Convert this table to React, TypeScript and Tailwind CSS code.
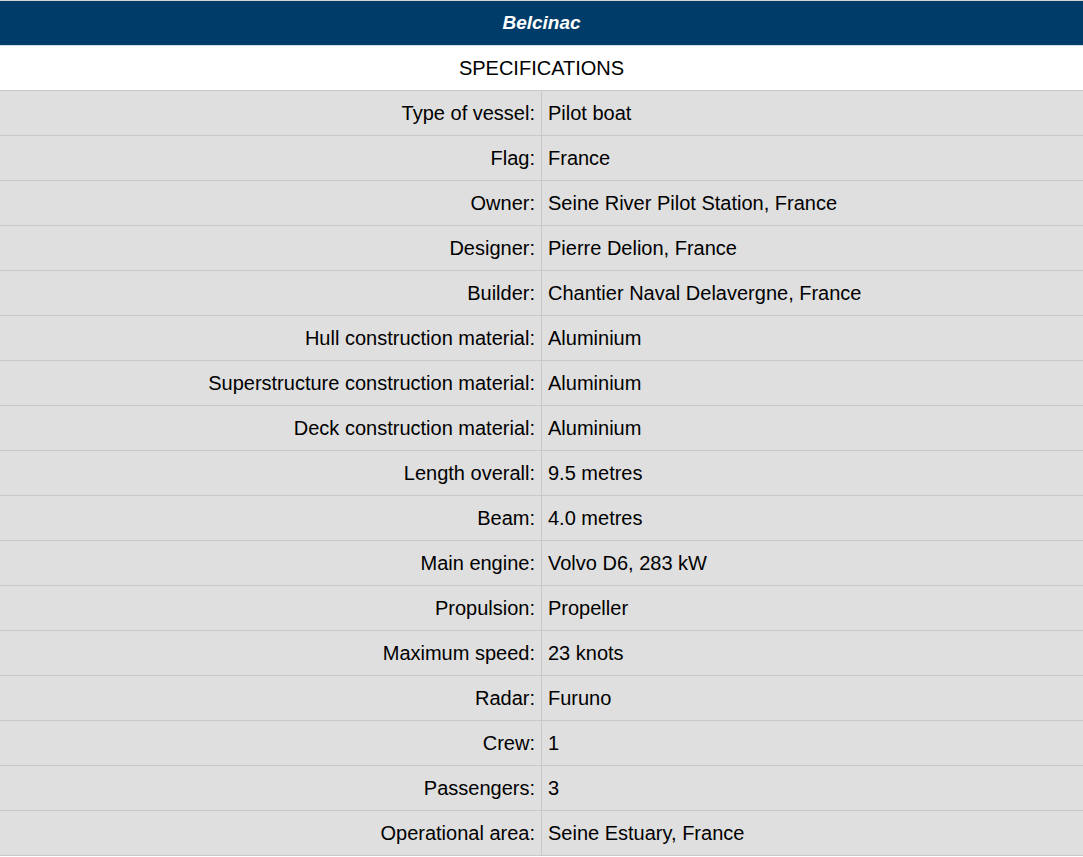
const specs: [string, string][] = [
  ['Type of vessel:', 'Pilot boat'],
  ['Flag:', 'France'],
  ['Owner:', 'Seine River Pilot Station, France'],
  ['Designer:', 'Pierre Delion, France'],
  ['Builder:', 'Chantier Naval Delavergne, France'],
  ['Hull construction material:', 'Aluminium'],
  ['Superstructure construction material:', 'Aluminium'],
  ['Deck construction material:', 'Aluminium'],
  ['Length overall:', '9.5 metres'],
  ['Beam:', '4.0 metres'],
  ['Main engine:', 'Volvo D6, 283 kW'],
  ['Propulsion:', 'Propeller'],
  ['Maximum speed:', '23 knots'],
  ['Radar:', 'Furuno'],
  ['Crew:', '1'],
  ['Passengers:', '3'],
  ['Operational area:', 'Seine Estuary, France'],
];

export default function App() {
  return (
    <div className="w-[1083px] bg-white text-[20px] text-black font-['Liberation_Sans',Arial,sans-serif] border-t border-[#d4d4d4]">
      <div className="h-[45px] bg-[#003c69] flex items-center justify-center border-b border-[#d5dde6]">
        <span className="text-white text-[19px] font-bold italic">Belcinac</span>
      </div>
      <div className="h-[45px] flex items-center justify-center border-b border-[#c8c8c8] pb-[1px]">
        SPECIFICATIONS
      </div>
      {specs.map(([label, value]) => (
        <div key={label} className="grid grid-cols-[542px_1fr] h-[45px] bg-[#dfdfdf] border-b border-[#c8c8c8]">
          <div className="flex items-center justify-end pr-[6px] pb-[1px] border-r border-[#c8c8c8]">{label}</div>
          <div className="flex items-center pl-[6px] pb-[1px]">{value}</div>
        </div>
      ))}
    </div>
  );
}
